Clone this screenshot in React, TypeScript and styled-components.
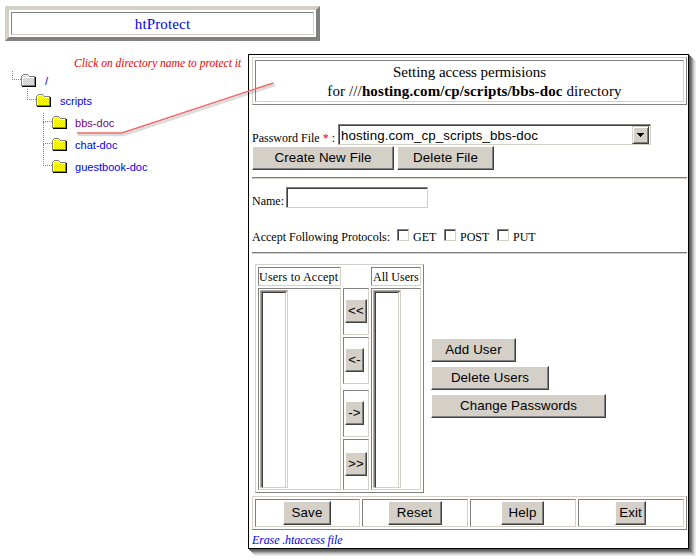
import React from "react";
import styled, { createGlobalStyle } from "styled-components";

const GlobalStyle = createGlobalStyle`
  * { box-sizing: border-box; }
  body { margin: 0; background: #fff; color: #000; overflow: hidden; }
`;

const serif = `"Liberation Serif", "Times New Roman", serif`;
const sans = `"Liberation Sans", Arial, sans-serif`;
const face = "#d4d0c8";
const shade = "#808080";
const dark = "#404040";

const Page = styled.main`
  position: relative;
  width: 700px;
  height: 560px;
  background: #fff;
  padding: 6px 0 0 5px;
  font-family: ${serif};
  font-size: 12px;
`;

const Banner = styled.header`
  width: 315px;
  height: 35px;
  border: 4px solid;
  border-color: ${face} ${shade} ${shade} ${face};
  padding: 2px;
`;

const BannerCell = styled.h1`
  margin: 0;
  height: 23px;
  border: 1px solid;
  border-color: ${shade} ${face} ${face} ${shade};
  text-align: center;
  font-size: 15px;
  font-weight: normal;
  line-height: 22px;
  letter-spacing: 0.15px;
  color: #0000f0;
`;

const Columns = styled.div`
  display: flex;
  padding-top: 13px;
`;

const Sidebar = styled.nav`
  width: 243px;
  flex: none;
`;

const Hint = styled.p`
  margin: 0;
  padding-left: 69px;
  height: 17px;
  line-height: 19px;
  font-size: 11.5px;
  font-style: italic;
  color: #f00000;
  white-space: nowrap;
`;

const TreeRow = styled.div<{ $indent: number; $height: number; $drop?: number }>`
  display: flex;
  align-items: flex-start;
  height: ${(p) => p.$height}px;
  padding-left: ${(p) => p.$indent}px;

  & > :not(:first-child) {
    margin-top: ${(p) => p.$drop ?? 3}px;
  }
`;

const Branch = styled.span<{ $stem: number; $joined?: boolean }>`
  width: 9px;
  height: ${(p) => p.$stem + (p.$joined ? 13 : 0)}px;
  margin-top: ${(p) => (p.$joined ? -13 : 0)}px;
  flex: none;
  border-left: 1px dotted ${shade};
  border-bottom: 1px dotted ${shade};
`;

const TreeLink = styled.a<{ $visited?: boolean; $gap?: number }>`
  font-family: ${sans};
  font-size: 11px;
  line-height: 14px;
  letter-spacing: 0.03px;
  color: ${(p) => (p.$visited ? "#800080" : "#0000f0")};
  margin-left: ${(p) => p.$gap ?? 8}px;
`;

const FolderSvg = styled.svg`
  display: block;
  flex: none;
`;

const Panel = styled.section`
  width: 441px;
  height: 495px;
  border: 1px solid #000;
  background: #fff;
  padding: 2px 1px 0 3px;
  box-shadow: 1px 1px 0 #5c5c5c, 2px 2px 0 #666, 3px 3px 0 #808080, 4px 4px 0 #a4a4a4,
    5px 5px 1px #c4c4c4, 6px 6px 1px #dedede, 7px 7px 1px #f0f0f0;
`;

const TitleFrame = styled.div`
  height: 48px;
  border: 1px solid;
  border-color: ${face} ${shade} ${shade} ${face};
  padding: 2px;
`;

const Title = styled.h2`
  margin: 0;
  height: 42px;
  padding-top: 2px;
  border: 1px solid;
  border-color: ${shade} ${face} ${face} ${shade};
  text-align: center;
  font-size: 15px;
  font-weight: normal;
  line-height: 19px;
`;

const Line = styled.div<{ $track: number; $shift?: number }>`
  letter-spacing: ${(p) => p.$track}px;
  padding-left: ${(p) => p.$shift ?? 0}px;
`;

const Row = styled.div<{ $height: number; $top?: number; $gap?: number }>`
  display: flex;
  height: ${(p) => p.$height}px;
  margin-top: ${(p) => p.$top ?? 0}px;
  gap: ${(p) => p.$gap ?? 0}px;
`;

const Label = styled.span<{ $width: number; $top: number }>`
  width: ${(p) => p.$width}px;
  flex: none;
  padding-top: ${(p) => p.$top}px;
  line-height: 14px;
  white-space: nowrap;
`;

const Required = styled.span`
  color: #f00000;
`;

const Select = styled.div`
  display: flex;
  justify-content: space-between;
  width: 313px;
  height: 21px;
  border: 1px solid;
  border-color: ${shade} ${face} ${face} ${shade};
  box-shadow: inset 1px 1px 0 ${dark};
  font-family: ${sans};
  font-size: 13.33px;
  line-height: 19px;
  letter-spacing: 0.1px;
  padding: 1px 1px 0 2px;
`;

const Arrow = styled.span`
  display: flex;
  align-items: center;
  justify-content: center;
  width: 17px;
  height: 18px;
  background: ${face};
  border: 1px solid;
  border-color: ${face} ${dark} ${dark} ${face};
  box-shadow: inset 1px 1px 0 #fff, inset -1px -1px 0 ${shade};
`;

const Button = styled.button<{ $width: number }>`
  width: ${(p) => p.$width}px;
  height: 24px;
  flex: none;
  padding: 0;
  border: 1px solid;
  border-color: #fff ${dark} ${dark} #fff;
  box-shadow: inset -1px -1px 0 ${shade};
  background: ${face};
  font-family: ${sans};
  font-size: 13.33px;
  line-height: 20px;
  color: #000;
  white-space: nowrap;
  letter-spacing: 0.1px;
`;

const Rule = styled.hr<{ $top: number }>`
  margin: ${(p) => p.$top}px 0 0;
  height: 2px;
  border: 0;
  border-top: 1px solid ${shade};
  border-bottom: 1px solid ${face};
`;

const Field = styled.input`
  width: 142px;
  height: 21px;
  padding: 0 3px;
  border: 1px solid;
  border-color: ${shade} ${face} ${face} ${shade};
  box-shadow: inset 1px 1px 0 ${dark};
  outline: none;
`;

const Check = styled.input`
  appearance: none;
  width: 12px;
  height: 12px;
  flex: none;
  margin: 0 4px 0 0;
  border: 1px solid;
  border-color: ${shade} ${face} ${face} ${shade};
  box-shadow: inset 1px 1px 0 ${dark};
`;

const Users = styled.div`
  display: flex;
  margin-top: 10px;
  padding-left: 3px;
  height: 229px;
`;

const UserTable = styled.div`
  display: grid;
  grid-template-columns: 83px 26px 50px;
  grid-template-rows: 19px 202px;
  gap: 2px;
  width: 169px;
  height: 229px;
  padding: 2px;
  border: 1px solid;
  border-color: ${face} ${shade} ${shade} ${face};
`;

const Cell = styled.div<{ $pad?: string; $track?: number }>`
  border: 1px solid;
  border-color: ${shade} ${face} ${face} ${shade};
  padding: ${(p) => p.$pad ?? "0"};
  line-height: 18px;
  white-space: nowrap;
  letter-spacing: ${(p) => p.$track ?? 0}px;
`;

const ListBox = styled.div`
  width: 28px;
  height: 198px;
  border: 1px solid;
  border-color: #b0aca4 ${face} ${face} #b0aca4;
  box-shadow: inset 1px 1px 0 ${shade};
  padding: 1px;

  &::before {
    content: "";
    display: block;
    height: 100%;
    border: 1px solid;
    border-color: ${dark} ${face} ${face} ${dark};
  }
`;

const MoverGroup = styled.div`
  display: grid;
  grid-template-rows: 47px 47px 2px 47px 51px;
  row-gap: 2px;
  height: 202px;
`;

const UserActions = styled.div`
  display: flex;
  flex-direction: column;
  gap: 4px;
  padding: 74px 0 0 7px;
`;

const Footer = styled.footer`
  display: grid;
  grid-template-columns: 105px 106px 106px 106px;
  gap: 2px;
  height: 34px;
  margin-top: 3px;
  padding: 2px;
  border: 1px solid;
  border-color: ${face} ${shade} ${shade} ${face};
`;

const FooterCell = styled.div`
  display: flex;
  justify-content: center;
  padding: 1px 1px 0 0;
  border: 1px solid;
  border-color: ${shade} ${face} ${face} ${shade};
`;

const EraseLink = styled.a`
  display: block;
  margin-top: 2px;
  line-height: 16px;
  font-style: italic;
  letter-spacing: -0.13px;
  color: #0000f0;
`;

const Pointer = styled.svg`
  position: absolute;
  left: 70px;
  top: 75px;
  pointer-events: none;
`;

function Folder() {
  return (
    <FolderSvg width="15" height="14" viewBox="0 0 15 14" shapeRendering="crispEdges">
      <defs>
        <pattern id="weave" width="2" height="2" patternUnits="userSpaceOnUse">
          <rect width="2" height="2" fill="#cccccc" />
          <rect width="1" height="1" fill="#ffff00" />
          <rect x="1" y="1" width="1" height="1" fill="#ffff00" />
        </pattern>
      </defs>
      <path d="M1 3h14v10H1z" fill="#000" />
      <path d="M0 2h1V1h1V0h5v1h1v1h6v10H0z" fill="#808080" />
      <path d="M1 2h1V1h5v1h1v1h5v8H1z" fill="#fff" />
      <path d="M2 4h11v7H2z" fill="url(#weave)" />
      <path d="M2 2h5v1H2z" fill="url(#weave)" />
    </FolderSvg>
  );
}

export default function App() {
  return (
    <>
      <GlobalStyle />
      <Page>
        <Banner>
          <BannerCell>htProtect</BannerCell>
        </Banner>
        <Columns>
          <Sidebar>
            <Hint>Click on directory name to protect it</Hint>
            <TreeRow $indent={7} $height={18}>
              <Branch $stem={9} />
              <Folder />
              <TreeLink $gap={9}>/</TreeLink>
            </TreeRow>
            <TreeRow $indent={22} $height={24} $drop={5}>
              <Branch $stem={11} />
              <Folder />
              <TreeLink $gap={9}>scripts</TreeLink>
            </TreeRow>
            <TreeRow $indent={38} $height={22}>
              <Branch $stem={9} />
              <Folder />
              <TreeLink $visited>bbs-doc</TreeLink>
            </TreeRow>
            <TreeRow $indent={38} $height={22}>
              <Branch $stem={9} $joined />
              <Folder />
              <TreeLink>chat-doc</TreeLink>
            </TreeRow>
            <TreeRow $indent={38} $height={22}>
              <Branch $stem={9} $joined />
              <Folder />
              <TreeLink>guestbook-doc</TreeLink>
            </TreeRow>
          </Sidebar>
          <Panel>
            <TitleFrame>
              <Title>
                <Line $track={-0.05}>Setting access permisions</Line>
                <Line $track={0.12} $shift={10}>
                  for ///<b>hosting.com/cp/scripts/bbs-doc</b> directory
                </Line>
              </Title>
            </TitleFrame>
            <Row $height={21} $top={19}>
              <Label $width={86} $top={7}>
                Password File <Required>*</Required> :
              </Label>
              <Select>
                hosting.com_cp_scripts_bbs-doc
                <Arrow>
                  <svg width="7" height="4" shapeRendering="crispEdges">
                    <path d="M0 0h7v1H6v1H5v1H4v1H3V3H2V2H1V1H0z" />
                  </svg>
                </Arrow>
              </Select>
            </Row>
            <Row $height={24} $top={1} $gap={3}>
              <Button $width={142}>Create New File</Button>
              <Button $width={97}>Delete File</Button>
            </Row>
            <Rule $top={7} />
            <Row $height={21} $top={8}>
              <Label $width={34} $top={7}>Name:</Label>
              <Field aria-label="Name" />
            </Row>
            <Row $height={16} $top={21}>
              <Label $width={145} $top={1}>Accept Following Protocols:</Label>
              <Check type="checkbox" aria-label="GET" />
              <Label $width={31} $top={1}>GET</Label>
              <Check type="checkbox" aria-label="POST" />
              <Label $width={37} $top={1}>POST</Label>
              <Check type="checkbox" aria-label="PUT" />
              <Label $width={30} $top={1}>PUT</Label>
            </Row>
            <Rule $top={7} />
            <Users>
              <UserTable>
                <Cell $track={0.22}>Users to Accept</Cell>
                <span />
                <Cell $pad="0 0 0 1px">All Users</Cell>
                <Cell $pad="1px">
                  <ListBox />
                </Cell>
                <MoverGroup>
                  <Cell $pad="10px 0 0 1px"><Button $width={22}>&lt;&lt;</Button></Cell>
                  <Cell $pad="10px 0 0 1px"><Button $width={19}>&lt;-</Button></Cell>
                  <span />
                  <Cell $pad="10px 0 0 1px"><Button $width={19}>-&gt;</Button></Cell>
                  <Cell $pad="12px 0 0 1px"><Button $width={22}>&gt;&gt;</Button></Cell>
                </MoverGroup>
                <Cell $pad="1px">
                  <ListBox />
                </Cell>
              </UserTable>
              <UserActions>
                <Button $width={85}>Add User</Button>
                <Button $width={118}>Delete Users</Button>
                <Button $width={175}>Change Passwords</Button>
              </UserActions>
            </Users>
            <Footer>
              <FooterCell><Button $width={48}>Save</Button></FooterCell>
              <FooterCell><Button $width={54}>Reset</Button></FooterCell>
              <FooterCell><Button $width={43}>Help</Button></FooterCell>
              <FooterCell><Button $width={31}>Exit</Button></FooterCell>
            </Footer>
            <EraseLink>Erase .htaccess file</EraseLink>
          </Panel>
        </Columns>
        <Pointer width="215" height="65" viewBox="0 0 215 65">
          <path d="M8 60H54L205 10" fill="none" stroke="#000" strokeOpacity=".14" strokeWidth="2.5" />
          <path d="M7 58H52L203.500 8" fill="none" stroke="#f06868" strokeWidth="1.6" />
        </Pointer>
      </Page>
    </>
  );
}
